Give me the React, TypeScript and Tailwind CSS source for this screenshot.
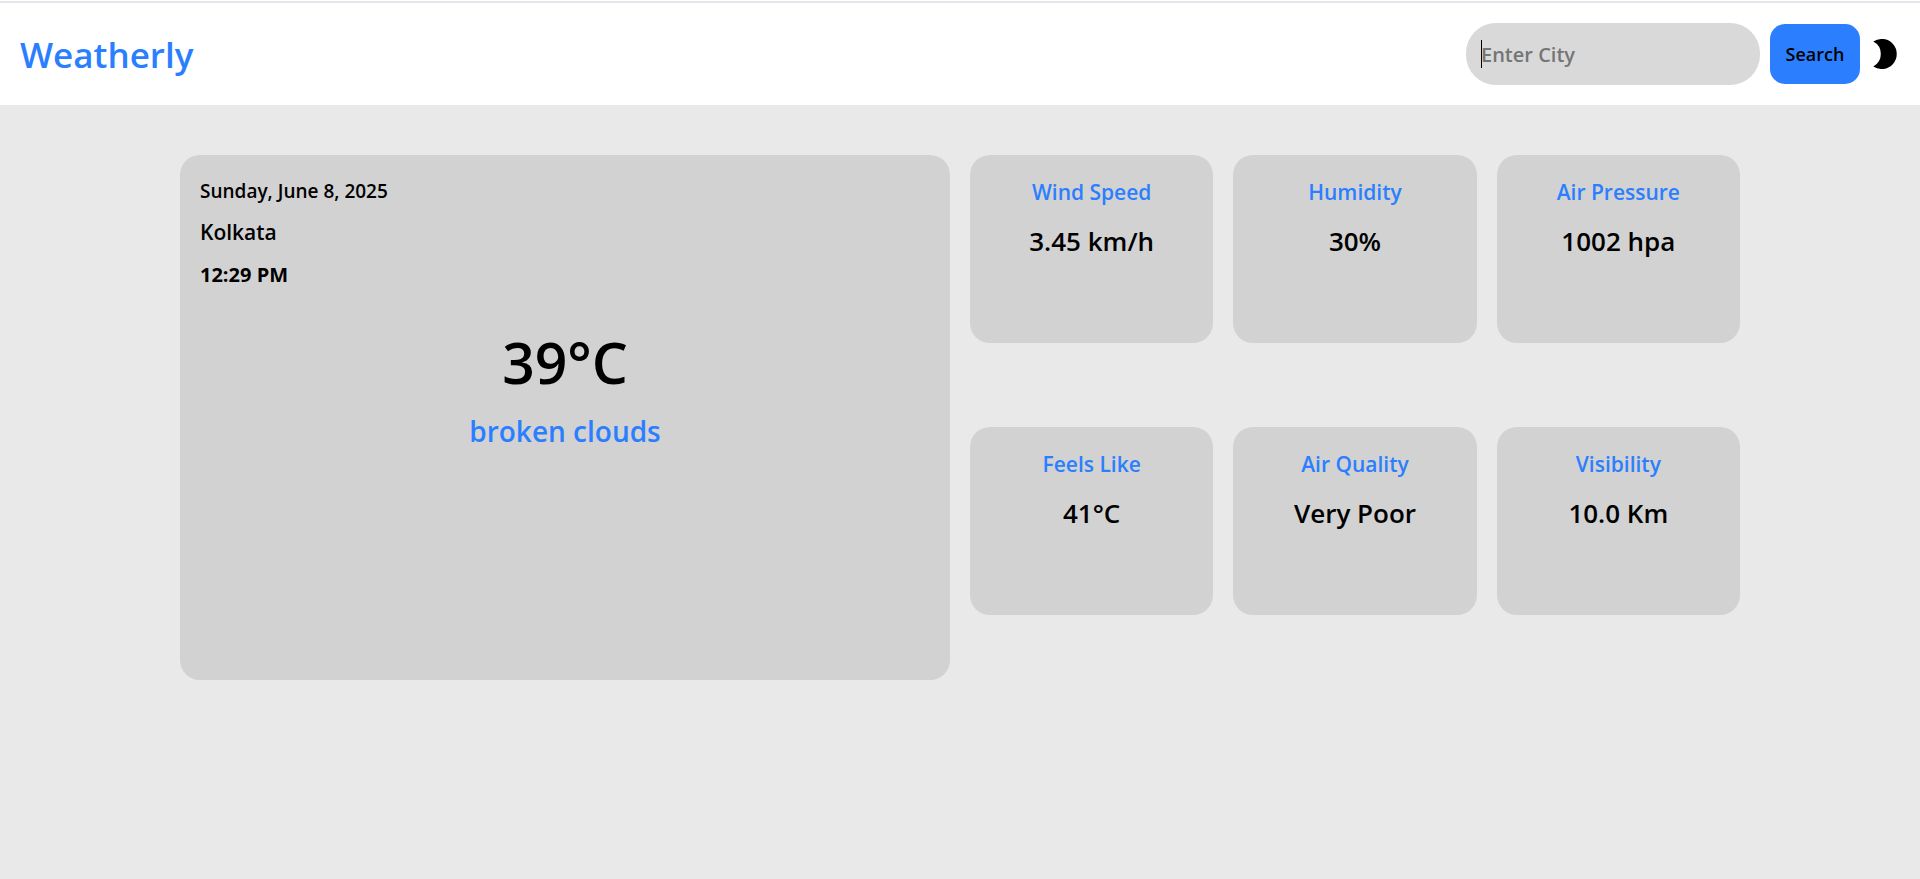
import React from "react";

type Stat = { label: string; value: string };

const stats: Stat[] = [
  { label: "Wind Speed", value: "3.45 km/h" },
  { label: "Humidity", value: "30%" },
  { label: "Air Pressure", value: "1002 hpa" },
  { label: "Feels Like", value: "41°C" },
  { label: "Air Quality", value: "Very Poor" },
  { label: "Visibility", value: "10.0 Km" },
];

function MoonIcon() {
  return (
    <svg viewBox="0 0 24 30" className="h-[30px] w-6" fill="currentColor" aria-hidden="true">
      <path d="M0.3 2.6A15 15 0 1 1 0.3 27.4A14 14 0 0 0 0.3 2.6Z" />
    </svg>
  );
}

function Header() {
  return (
    <div className="bg-white pt-px">
      <header className="flex items-center justify-between border-t-2 border-[#e4e4ea] py-5 pr-[23px] pl-5">
        <h1 className="pt-0.5 text-[35px] leading-[50px] font-semibold text-[#2b7fff]">Weatherly</h1>
        <form className="flex items-center" onSubmit={(e) => e.preventDefault()}>
          <div className="relative mr-2.5">
            <input
              type="text"
              autoFocus
              aria-label="City"
              placeholder="Enter City"
              className="h-[62px] w-[294px] rounded-[30px] bg-[#d9d9d9] px-[15px] text-[20px] font-semibold caret-transparent outline-none placeholder:text-[#757575]"
            />
            <span className="absolute top-[17px] left-[15px] h-7 w-px bg-black" />
          </div>
          <button
            type="submit"
            className="mr-[13px] h-[60px] w-[90px] rounded-[15px] bg-[#2b7fff] text-[18px] font-semibold"
          >
            Search
          </button>
          <button type="button" aria-label="Toggle dark mode">
            <MoonIcon />
          </button>
        </form>
      </header>
    </div>
  );
}

function StatCard({ label, value }: Stat) {
  return (
    <section className="h-[188px] rounded-[20px] bg-[#d2d2d2] pt-5 text-center font-semibold">
      <h2 className="text-[21px] leading-[35px] text-[#2b7fff]">{label}</h2>
      <p className="mt-[11px] text-[26px] leading-10">{value}</p>
    </section>
  );
}

export default function App() {
  return (
    <div className="min-h-screen bg-[#e9e9e9] font-['Open_Sans','Noto_Sans',sans-serif] text-black">
      <Header />
      <main className="px-[180px] pt-[50px] pb-5">
        <div className="grid grid-cols-2 items-start gap-5">
          <section className="h-[525px] rounded-[20px] bg-[#d2d2d2] p-5 font-semibold">
            <p className="text-[19px] leading-8">Sunday, June 8, 2025</p>
            <p className="mt-2 text-[21px] leading-[34px]">Kolkata</p>
            <p className="mt-2.5 text-[20px] leading-8 font-bold">12:29 PM</p>
            <div className="mt-8 text-center">
              <p className="text-[57px] leading-[78px]">39°C</p>
              <p className="mt-2.5 text-[28px] leading-10 text-[#2b7fff]">broken clouds</p>
            </div>
          </section>
          <div className="grid grid-cols-3 gap-x-5 gap-y-[84px]">
            {stats.map((s) => (
              <StatCard key={s.label} {...s} />
            ))}
          </div>
        </div>
      </main>
    </div>
  );
}
